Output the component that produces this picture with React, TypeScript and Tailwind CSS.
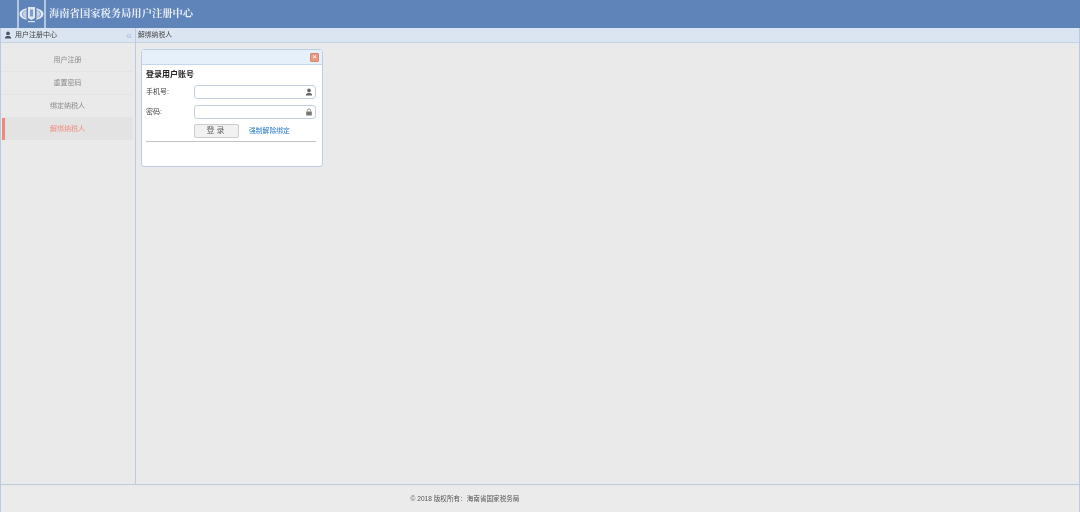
import React from 'react';

const menu = ['用户注册', '重置密码', '绑定纳税人', '解绑纳税人'];

const Logo = () => (
    <div className="ml-[17px] flex h-full w-[29px] shrink-0 items-center justify-center border-x-2 border-[#b4c6e0]">
        <svg width="25" height="20" viewBox="0 0 25 20">
            <ellipse cx="12.5" cy="10" rx="12" ry="6.5" fill="#e4ebf5" />
            <ellipse cx="12.5" cy="10" rx="9.5" ry="5" fill="#5f84ba" />
            <path d="M3.5 10 C4.5 7.5 6.5 6 8 5.8 V14.2 C6.5 14 4.5 12.5 3.5 10 Z" fill="#c3d1e6" />
            <path d="M21.5 10 C20.5 7.5 18.5 6 17 5.8 V14.2 C18.5 14 20.5 12.5 21.5 10 Z" fill="#c3d1e6" />
            <rect x="7.5" y="2" width="10" height="16" fill="#5f84ba" />
            <path d="M9 3 H16 V14 L12.5 16 L9 14 Z" fill="#dfe7f3" />
            <rect x="11" y="5.5" width="3" height="7" fill="#7f9cc8" />
            <rect x="9" y="17" width="7" height="1.2" fill="#dfe7f3" />
        </svg>
    </div>
);

const UserIcon = ({ className }: { className: string }) => (
    <svg viewBox="0 0 10 10" className={className} fill="currentColor">
        <circle cx="5" cy="3" r="2.3" />
        <path d="M1 9.5 C1 6.8 3 6.2 5 6.2 C7 6.2 9 6.8 9 9.5 Z" />
    </svg>
);

const LockIcon = () => (
    <svg viewBox="0 0 10 10" className="h-[8px] w-[8px] text-[#777]" fill="currentColor">
        <rect x="1.5" y="4.5" width="7" height="5" rx="0.5" />
        <path d="M3 4.5 V3 a2 2 0 0 1 4 0 V4.5" fill="none" stroke="currentColor" strokeWidth="1" />
    </svg>
);

const Field = ({ label, icon }: { label: string; icon: React.ReactNode }) => (
    <div className="flex h-[14px] items-center">
        <span className="w-[48px] text-[7px] text-[#444]">{label}</span>
        <div className="flex h-[14px] w-[122px] items-center justify-end rounded-[3px] border border-[#c3cfdf] bg-white pr-[2px]">
            {icon}
        </div>
    </div>
);

export default function App() {
    return (
        <div className="flex h-[512px] w-[1080px] flex-col overflow-hidden bg-[#eaeaea] blur-[0.35px] font-['Liberation_Sans','Noto_Sans_CJK_SC',sans-serif]">
            <header className="flex h-[28px] shrink-0 items-center bg-[#5f84ba]">
                <Logo />
                <h1 className="ml-[3px] font-['Liberation_Serif','Noto_Serif_CJK_SC','Noto_Sans_CJK_SC',serif] text-[10.3px] font-bold text-[#e8eef7]">
                    海南省国家税务局用户注册中心
                </h1>
            </header>

            <div className="flex min-h-0 flex-1 border-x border-[#b9c9e0]">
                <aside className="flex w-[135px] shrink-0 flex-col border-r border-[#bccbe0]">
                    <div className="flex h-[15px] shrink-0 items-center justify-between border-b border-[#c5d3e6] bg-[#dbe5f1] pl-[3px] pr-[3px]">
                        <div className="flex items-center gap-[3px]">
                            <UserIcon className="h-[8px] w-[8px] text-[#4a5568]" />
                            <span className="text-[7px] text-[#444]">用户注册中心</span>
                        </div>
                        <span className="text-[11px] leading-none text-[#a9bcd6]">«</span>
                    </div>
                    <nav className="flex flex-col pl-[1px] pr-[2px] pt-[6px]">
                        {menu.map((item, i) => (
                            <div
                                key={item}
                                className={
                                    i === 3
                                        ? 'flex h-[22px] items-center justify-center border-l-[3px] border-[#f08a78] bg-[#e3e3e3] pr-[3px] text-[7px] text-[#ef8f80]'
                                        : 'flex h-[23px] items-center justify-center border-b border-[#e4e4e4] text-[7px] text-[#8b8b8b]'
                                }
                            >
                                {item}
                            </div>
                        ))}
                    </nav>
                </aside>

                <main className="flex min-w-0 flex-1 flex-col">
                    <div className="flex h-[15px] shrink-0 items-center border-b border-[#c5d3e6] bg-[#dbe5f1] pl-[2px] text-[6.8px] text-[#444]">
                        解绑纳税人
                    </div>
                    <div className="pl-[5px] pt-[6px]">
                        <div className="h-[118px] w-[182px] rounded-[3px] border border-[#bccde4] bg-white">
                            <div className="flex h-[15px] items-center justify-end border-b border-[#c5d6ec] bg-[#e6f0fb] pr-[3px]">
                                <span className="flex h-[9px] w-[9px] items-center justify-center rounded-[1px] border border-[#d08a70] bg-[#eb9a80] text-[8px] leading-none text-white">
                                    ×
                                </span>
                            </div>
                            <div className="pl-[4px] pr-[6px] pt-[4px]">
                                <h2 className="text-[8px] font-bold leading-[11px] text-[#222]">登录用户账号</h2>
                                <div className="mt-[5px] flex flex-col gap-[6px]">
                                    <Field label="手机号:" icon={<UserIcon className="h-[8px] w-[8px] text-[#666]" />} />
                                    <Field label="密码:" icon={<LockIcon />} />
                                </div>
                                <div className="ml-[48px] mt-[5px] flex items-center">
                                    <button className="h-[14px] w-[45px] rounded-[2px] border border-[#ccc] bg-[#f1f1f1] text-[8px] tracking-[2px] text-[#666]">
                                        登录
                                    </button>
                                    <span className="ml-[10px] text-[6.8px] text-[#1f78c8]">强制解除绑定</span>
                                </div>
                                <div className="mt-[3px] border-t border-[#c4c4c4]" />
                            </div>
                        </div>
                    </div>
                </main>
            </div>

            <footer className="flex h-[28px] shrink-0 items-center justify-center border-t border-x border-[#bccbe0] bg-[#ebebeb] pr-[150px] text-[6.6px] text-[#555]">
                © 2018 版权所有：海南省国家税务局
            </footer>
        </div>
    );
}
